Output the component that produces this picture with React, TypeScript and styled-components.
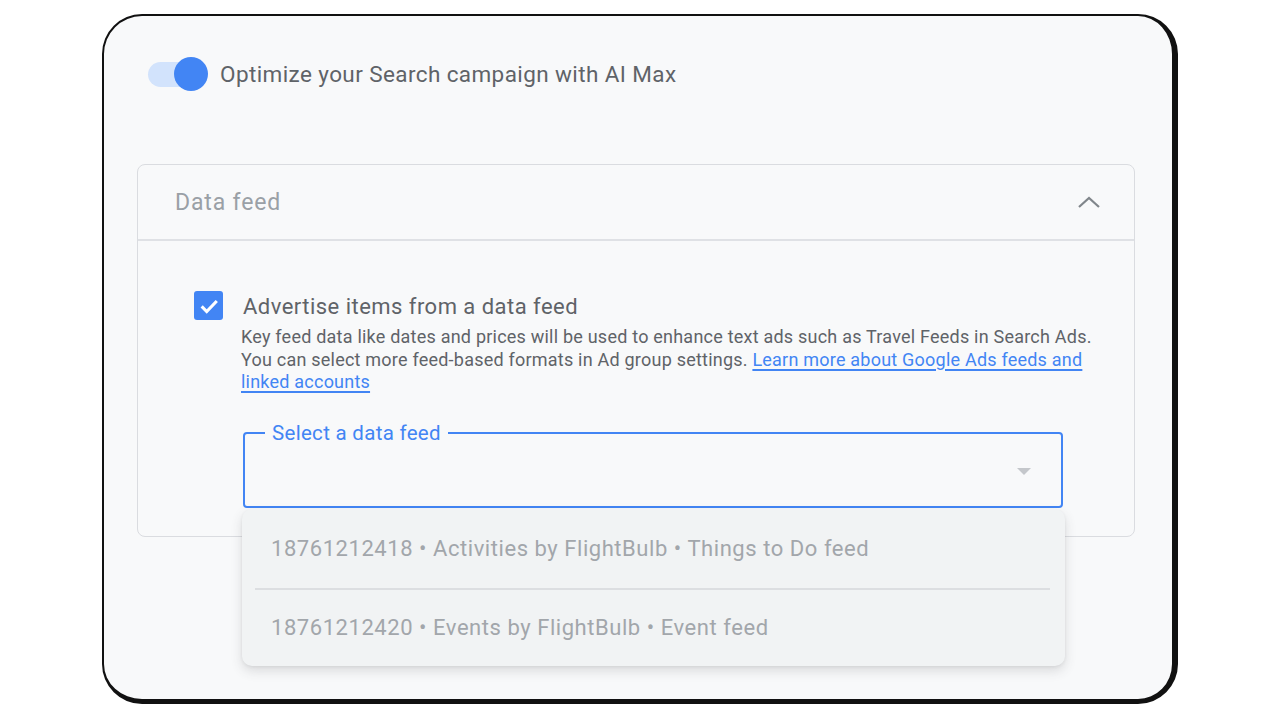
import React from "react";
import styled, { createGlobalStyle } from "styled-components";

const Global = createGlobalStyle`
  html, body { margin: 0; padding: 0; background: #ffffff; }
  body { font-family: Roboto, "Liberation Sans", Arial, sans-serif; }
  * { box-sizing: border-box; }
`;

const Frame = styled.div`
  margin: 14px 0 0 102px;
  width: 1076px;
  height: 690px;
  background: #f8f9fa;
  border-style: solid;
  border-color: #111;
  border-width: 2px 6px 5px 2px;
  border-radius: 40px;
  padding: 0 37px 0 33px;
  display: flex;
  flex-direction: column;
`;

const ToggleRow = styled.div`
  margin-top: 40px;
  height: 36px;
  display: flex;
  align-items: center;
  gap: 12px;
  padding-left: 11px;
`;

const Toggle = styled.div`
  position: relative;
  width: 60px;
  height: 36px;
  display: flex;
  align-items: center;
`;

const Track = styled.div`
  width: 50px;
  height: 25px;
  border-radius: 13px;
  background: #d2e3fc;
`;

const Knob = styled.div`
  position: absolute;
  right: 0;
  top: 1px;
  width: 34px;
  height: 34px;
  border-radius: 50%;
  background: #4285f4;
`;

const ToggleLabel = styled.span`
  font-size: 22.5px;
  color: #5f6368;
  letter-spacing: 0.4px;
`;

const Card = styled.section`
  margin-top: 72px;
  width: 998px;
  height: 373px;
  border: 1.5px solid #dadce0;
  border-radius: 8px;
  display: flex;
  flex-direction: column;
`;

const CardHeader = styled.div`
  height: 76px;
  flex: none;
  display: flex;
  align-items: center;
  justify-content: space-between;
  padding: 0 33px 0 37px;
  border-bottom: 2px solid #dfe1e5;
`;

const HeaderTitle = styled.span`
  font-size: 23px;
  letter-spacing: 0.85px;
  color: #9aa0a6;
`;

const CardBody = styled.div`
  padding: 50px 0 0 56px;
  display: flex;
  gap: 20px;
`;

const CheckBox = styled.div`
  flex: none;
  width: 29px;
  height: 29px;
  border-radius: 3px;
  background: #4285f4;
  display: flex;
  align-items: center;
  justify-content: center;
`;

const Content = styled.div`
  display: flex;
  flex-direction: column;
`;

const OptionTitle = styled.div`
  font-size: 22px;
  letter-spacing: 0.47px;
  line-height: 28px;
  color: #5f6368;
  margin-top: 2px;
`;

const Description = styled.p`
  margin: 5px 0 0 -2px;
  width: 862px;
  font-size: 18px;
  letter-spacing: 0.22px;
  line-height: 22.5px;
  color: #5f6368;
`;

const Link = styled.a`
  color: #4285f4;
  text-decoration: underline;
  text-decoration-thickness: 1.5px;
  text-underline-offset: 3px;
`;

const SelectWrap = styled.div`
  position: relative;
  margin-top: 28px;
  width: 820px;
`;

const Field = styled.fieldset`
  margin: 0;
  padding: 0 30px 0 20px;
  height: 86px;
  border: 2px solid #4285f4;
  border-radius: 4px;
  display: flex;
  align-items: center;
  justify-content: flex-end;
`;

const Legend = styled.legend`
  padding: 0 7px;
  font-size: 20.5px;
  letter-spacing: 0.3px;
  line-height: 22px;
  color: #4285f4;
`;

const Arrow = styled.span`
  width: 0;
  height: 0;
  margin-top: -6px;
  border-left: 7px solid transparent;
  border-right: 7px solid transparent;
  border-top: 7px solid #c4c7cb;
`;

const Menu = styled.ul`
  position: absolute;
  left: -1px;
  top: 87px;
  width: 823px;
  margin: 0;
  padding: 0;
  list-style: none;
  background: #f1f3f4;
  border-radius: 10px;
  box-shadow: 0 5px 12px rgba(60, 64, 67, 0.16), 0 1px 3px rgba(60, 64, 67, 0.08);
`;

const MenuItem = styled.li<{ $h: number }>`
  height: ${(p) => p.$h}px;
  display: flex;
  align-items: center;
  padding-left: 29px;
  font-size: 22px;
  letter-spacing: 0.55px;
  color: #a2a6ab;
`;

const Divider = styled.li`
  height: 2px;
  margin: 0 15px 0 13px;
  background: #dcdee1;
`;

export default function App() {
  return (
    <>
      <Global />
      <Frame>
        <ToggleRow>
          <Toggle>
            <Track />
            <Knob />
          </Toggle>
          <ToggleLabel>Optimize your Search campaign with AI Max</ToggleLabel>
        </ToggleRow>
        <Card>
          <CardHeader>
            <HeaderTitle>Data feed</HeaderTitle>
            <svg width="24" height="24" viewBox="0 0 24 24">
              <path d="M2 17 L12 8 L22 17" fill="none" stroke="#80868b" strokeWidth="2.2" />
            </svg>
          </CardHeader>
          <CardBody>
            <CheckBox>
              <svg width="22" height="22" viewBox="0 0 24 24">
                <path d="M4 12.5 L9.5 18 L20.5 6.5" fill="none" stroke="#ffffff" strokeWidth="3.4" />
              </svg>
            </CheckBox>
            <Content>
              <OptionTitle>Advertise items from a data feed</OptionTitle>
              <Description>
                Key feed data like dates and prices will be used to enhance text ads such as Travel Feeds in Search Ads.
                You can select more feed-based formats in Ad group settings.{" "}
                <Link href="#">Learn more about Google Ads feeds and linked accounts</Link>
              </Description>
              <SelectWrap>
                <Field>
                  <Legend>Select a data feed</Legend>
                  <Arrow />
                </Field>
                <Menu>
                  <MenuItem $h={79}>18761212418 • Activities by FlightBulb • Things to Do feed</MenuItem>
                  <Divider />
                  <MenuItem $h={76}>18761212420 • Events by FlightBulb • Event feed</MenuItem>
                </Menu>
              </SelectWrap>
            </Content>
          </CardBody>
        </Card>
      </Frame>
    </>
  );
}
